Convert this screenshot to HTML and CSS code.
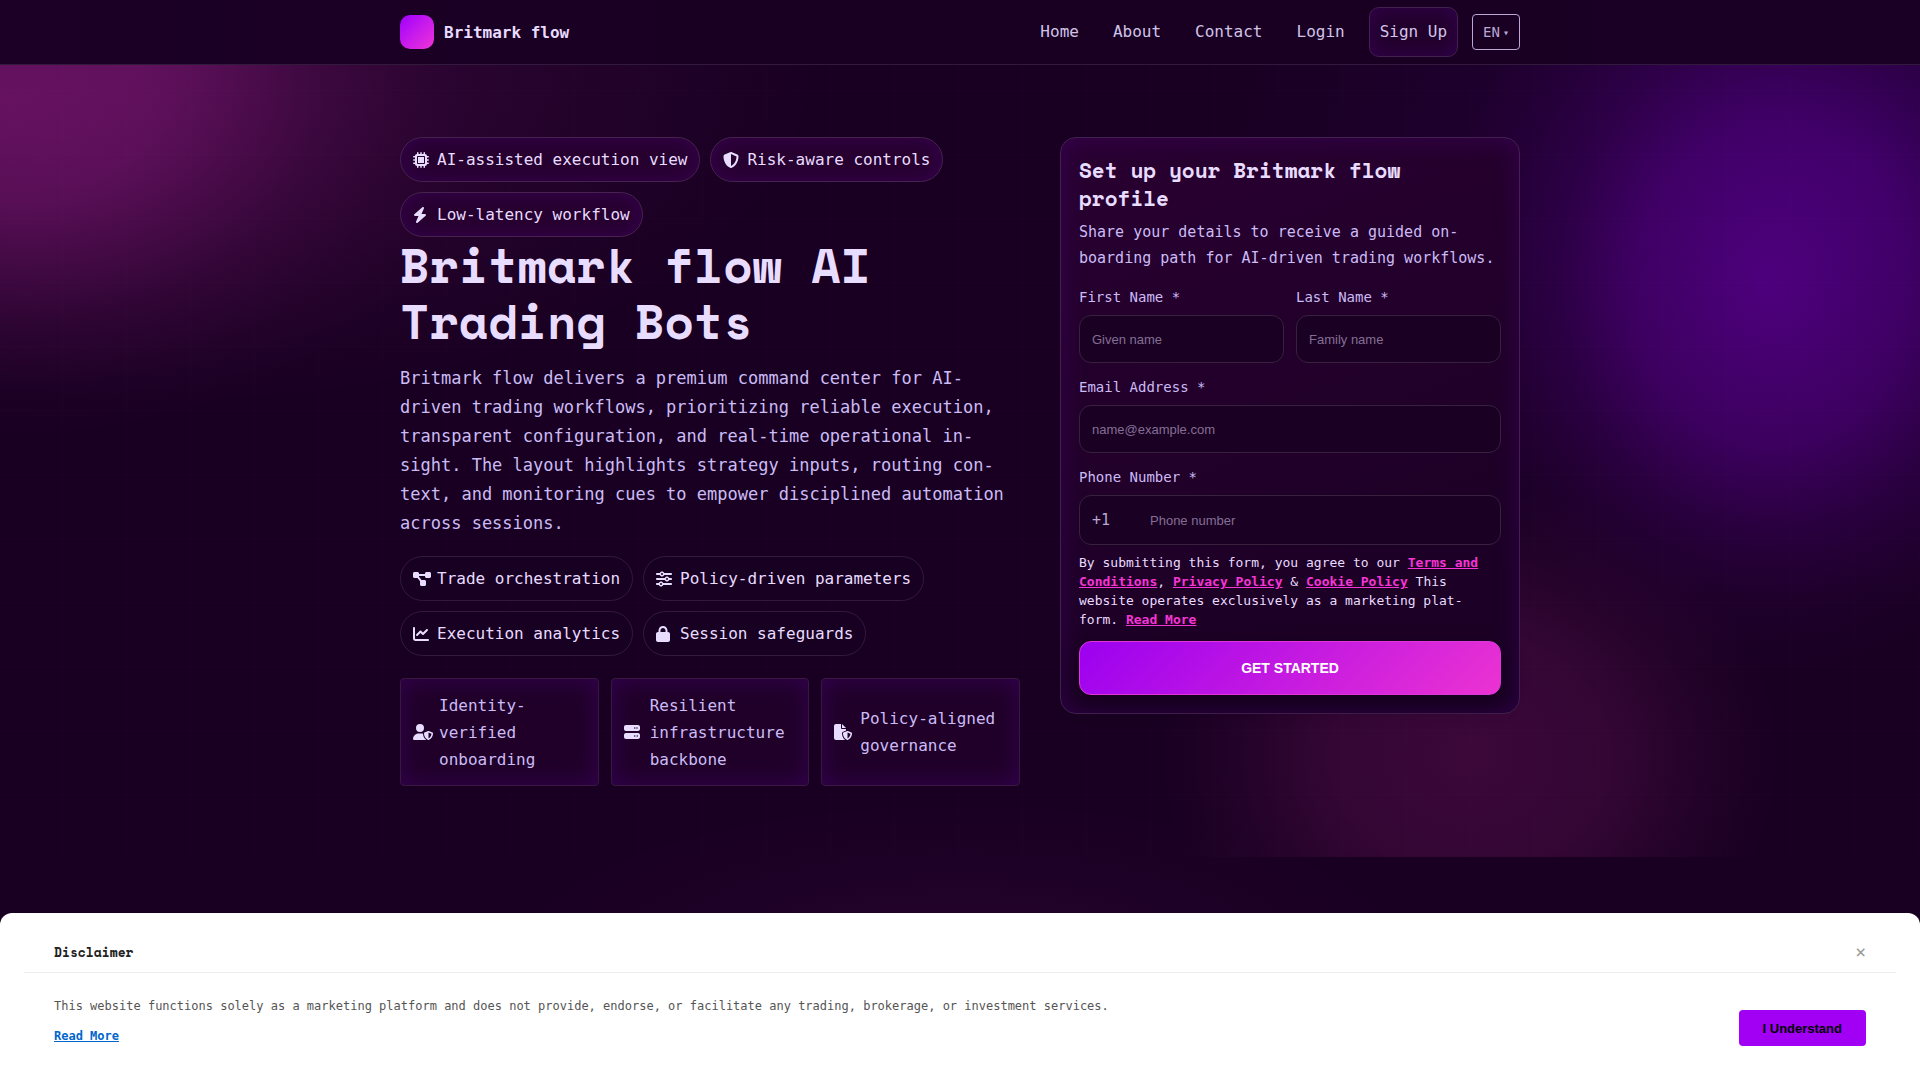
FILE: index.html
```html
<!DOCTYPE html>
<html lang="en">
<head>
    <meta charset="UTF-8">
    <meta name="viewport" content="width=device-width, initial-scale=1.0">
    <title>Britmark flow</title>
    <link rel="stylesheet" href="styles.css">
</head>
<body>

    <header class="site-header">
        <div class="container header-inner">
            <a href="#" class="brand">
                <span class="brand-mark"></span>
                <span>Britmark flow</span>
            </a>
            <nav class="nav">
                <a href="#" class="nav-link">Home</a>
                <a href="#" class="nav-link">About</a>
                <a href="#" class="nav-link">Contact</a>
                <a href="#" class="nav-link">Login</a>
                <a href="#" class="nav-link nav-signup">Sign Up</a>
                <button type="button" class="lang">EN <span class="caret">▾</span></button>
            </nav>
        </div>
    </header>

    <main class="hero">
        <div class="container hero-grid">

            <section class="hero-copy">
                <div class="chips">
                    <span class="chip chip-glow">
                        <span class="icon"><svg viewBox="0 0 512 512"><path d="M176 24c0-13.300-10.700-24-24-24s-24 10.700-24 24V64c-35.300 0-64 28.700-64 64H24c-13.300 0-24 10.700-24 24s10.700 24 24 24H64v56H24c-13.300 0-24 10.700-24 24s10.700 24 24 24H64v56H24c-13.300 0-24 10.700-24 24s10.700 24 24 24H64c0 35.300 28.700 64 64 64v40c0 13.300 10.700 24 24 24s24-10.700 24-24V448h56v40c0 13.300 10.700 24 24 24s24-10.700 24-24V448h56v40c0 13.300 10.700 24 24 24s24-10.700 24-24V448c35.300 0 64-28.700 64-64h40c13.300 0 24-10.700 24-24s-10.700-24-24-24H448V280h40c13.300 0 24-10.700 24-24s-10.700-24-24-24H448V176h40c13.300 0 24-10.700 24-24s-10.700-24-24-24H448c0-35.300-28.700-64-64-64V24c0-13.300-10.700-24-24-24s-24 10.700-24 24V64H280V24c0-13.300-10.700-24-24-24s-24 10.700-24 24V64H176V24zM160 128H352c17.700 0 32 14.300 32 32V352c0 17.700-14.300 32-32 32H160c-17.700 0-32-14.300-32-32V160c0-17.700 14.300-32 32-32zm192 32H160V352H352V160z"/></svg></span>
                        AI-assisted execution view
                    </span>
                    <span class="chip chip-glow">
                        <span class="icon"><svg viewBox="0 0 512 512"><path d="M256 0c4.600 0 9.200 1 13.400 2.900L457.700 82.800c22 9.300 38.400 31 38.300 57.200c-.5 99.200-41.300 280.700-213.600 363.200c-16.700 8-36.100 8-52.800 0C57.300 420.700 16.500 239.200 16 140c-.1-26.200 16.300-47.900 38.300-57.200L242.700 2.900C246.800 1 251.400 0 256 0zm0 66.800V444.800C394 378 431.100 230.100 432 141.400L256 66.800z"/></svg></span>
                        Risk-aware controls
                    </span>
                    <span class="chip chip-glow">
                        <span class="icon"><svg viewBox="0 0 448 512"><path d="M349.400 44.600c5.900-13.700 1.500-29.700-10.600-38.500s-28.600-8-39.900 1.800l-256 224c-10 8.800-13.600 22.900-8.900 35.300S50.700 288 64 288H175.500L98.600 467.400c-5.900 13.700-1.500 29.700 10.600 38.500s28.600 8 39.900-1.800l256-224c10-8.800 13.600-22.900 8.900-35.300s-16.600-20.700-30-20.700H272.500L349.400 44.600z"/></svg></span>
                        Low-latency workflow
                    </span>
                </div>

                <h1>Britmark flow AI Trading Bots</h1>
                <p class="lead">Britmark flow delivers a premium command center for AI-driven trading workflows, prioritizing reliable execution, transparent configuration, and real-time operational in&shy;sight. The layout highlights strategy inputs, routing con&shy;text, and monitoring cues to empower disciplined automation across sessions.</p>

                <div class="chips">
                    <span class="chip">
                        <span class="icon"><svg viewBox="0 0 576 512"><path d="M0 80C0 53.500 21.500 32 48 32h96c26.500 0 48 21.500 48 48V96H384V80c0-26.500 21.500-48 48-48h96c26.500 0 48 21.500 48 48v96c0 26.500-21.500 48-48 48H432c-26.500 0-48-21.500-48-48V160H192v16c0 1.700-.1 3.400-.3 5L272 288h96c26.500 0 48 21.500 48 48v96c0 26.500-21.500 48-48 48H272c-26.500 0-48-21.500-48-48V336c0-1.700 .1-3.400 .3-5L144 224H48c-26.500 0-48-21.500-48-48V80z"/></svg></span>
                        Trade orchestration
                    </span>
                    <span class="chip">
                        <span class="icon"><svg viewBox="0 0 512 512"><path d="M0 416c0 17.700 14.300 32 32 32l54.700 0c12.300 28.300 40.500 48 73.300 48s61-19.700 73.300-48L480 448c17.700 0 32-14.300 32-32s-14.300-32-32-32l-246.700 0c-12.300-28.300-40.500-48-73.300-48s-61 19.700-73.300 48L32 384c-17.700 0-32 14.300-32 32zm128 0a32 32 0 1 1 64 0 32 32 0 1 1 -64 0zM320 256a32 32 0 1 1 64 0 32 32 0 1 1 -64 0zm32-80c-32.800 0-61 19.700-73.300 48L32 224c-17.700 0-32 14.300-32 32s14.300 32 32 32l246.700 0c12.300 28.300 40.500 48 73.300 48s61-19.700 73.300-48l54.700 0c17.700 0 32-14.300 32-32s-14.300-32-32-32l-54.700 0c-12.300-28.300-40.500-48-73.300-48zM192 128a32 32 0 1 1 0-64 32 32 0 1 1 0 64zm73.300-64C253 35.700 224.800 16 192 16s-61 19.700-73.300 48L32 64C14.300 64 0 78.300 0 96s14.300 32 32 32l86.700 0c12.300 28.300 40.500 48 73.300 48s61-19.700 73.300-48L480 128c17.700 0 32-14.300 32-32s-14.300-32-32-32L265.300 64z"/></svg></span>
                        Policy-driven parameters
                    </span>
                    <span class="chip">
                        <span class="icon"><svg viewBox="0 0 512 512"><path d="M64 64c0-17.700-14.300-32-32-32S0 46.300 0 64V400c0 44.200 35.800 80 80 80H480c17.700 0 32-14.300 32-32s-14.300-32-32-32H80c-8.800 0-16-7.200-16-16V64zm406.600 86.600c12.500-12.500 12.500-32.800 0-45.300s-32.800-12.500-45.300 0L320 210.700l-57.400-57.400c-12.500-12.500-32.800-12.500-45.300 0l-112 112c-12.500 12.500-12.500 32.800 0 45.300s32.800 12.500 45.300 0L240 221.300l57.400 57.400c12.500 12.500 32.800 12.500 45.300 0l128-128z"/></svg></span>
                        Execution analytics
                    </span>
                    <span class="chip">
                        <span class="icon"><svg viewBox="0 0 448 512"><path d="M144 144v48H304V144c0-44.200-35.800-80-80-80s-80 35.800-80 80zM80 192V144C80 64.500 144.500 0 224 0s144 64.500 144 144v48h16c35.300 0 64 28.700 64 64V448c0 35.300-28.700 64-64 64H64c-35.300 0-64-28.700-64-64V256c0-35.300 28.700-64 64-64H80z"/></svg></span>
                        Session safeguards
                    </span>
                </div>

                <div class="trust">
                    <div class="trust-card">
                        <span class="icon"><svg viewBox="0 0 640 512"><path d="M224 256A128 128 0 1 0 224 0a128 128 0 1 0 0 256zm-45.700 48C79.800 304 0 383.800 0 482.300C0 498.700 13.300 512 29.700 512H418.300c1.800 0 3.500-.2 5.300-.5c-76.300-55.100-99.800-141-103.100-200.200c-16.100-4.800-33.100-7.300-50.700-7.300H178.300zm308.800-78.300l-120 48C358 277.400 352 286.200 352 296c0 63.300 25.900 168.800 134.800 214.200c5.900 2.500 12.600 2.500 18.500 0C614.100 464.800 640 359.300 640 296c0-9.800-6-18.600-15.100-22.300l-120-48c-5.700-2.300-12.100-2.300-17.800 0zM591.400 312c-3.900 50.700-27.200 116.700-95.400 149.700V273.800L591.400 312z"/></svg></span>
                        <span>Identity-verified onboarding</span>
                    </div>
                    <div class="trust-card">
                        <span class="icon"><svg viewBox="0 0 512 512"><path d="M64 32C28.700 32 0 60.700 0 96v64c0 35.300 28.700 64 64 64H448c35.300 0 64-28.700 64-64V96c0-35.300-28.700-64-64-64H64zm280 72a24 24 0 1 1 0 48 24 24 0 1 1 0-48zm48 24a24 24 0 1 1 48 0 24 24 0 1 1 -48 0zM64 288c-35.300 0-64 28.700-64 64v64c0 35.300 28.700 64 64 64H448c35.300 0 64-28.700 64-64V352c0-35.300-28.700-64-64-64H64zm280 72a24 24 0 1 1 0 48 24 24 0 1 1 0-48zm56 24a24 24 0 1 1 48 0 24 24 0 1 1 -48 0z"/></svg></span>
                        <span>Resilient infrastructure backbone</span>
                    </div>
                    <div class="trust-card">
                        <span class="icon"><svg viewBox="0 0 576 512"><path d="M0 64C0 28.700 28.700 0 64 0H224V128c0 17.700 14.300 32 32 32H384v47l-92.800 37.100c-21.300 8.500-35.200 29.100-35.200 52c0 56.600 18.900 148 94.200 208.300c-9 4.800-19.300 7.600-30.200 7.600H64c-35.300 0-64-28.700-64-64V64zm384 64H256V0L384 128zm39.100 97.700c5.700-2.300 12.100-2.300 17.800 0l120 48C570 277.400 576 286.200 576 296c0 63.300-25.900 168.800-134.800 214.200c-5.900 2.500-12.600 2.500-18.500 0C313.900 464.800 288 359.300 288 296c0-9.800 6-18.600 15.100-22.300l120-48zM527.400 312L432 273.800V461.700c68.200-33 91.500-99 95.400-149.700z"/></svg></span>
                        <span>Policy-aligned governance</span>
                    </div>
                </div>
            </section>

            <form class="signup" action="#" method="post">
                <h2>Set up your Britmark flow profile</h2>
                <p class="signup-text">Share your details to receive a guided on&shy;boarding path for AI-driven trading workflows.</p>

                <div class="row">
                    <div class="field">
                        <label for="first-name">First Name *</label>
                        <input type="text" id="first-name" placeholder="Given name">
                    </div>
                    <div class="field">
                        <label for="last-name">Last Name *</label>
                        <input type="text" id="last-name" placeholder="Family name">
                    </div>
                </div>
                <div class="field">
                    <label for="email">Email Address *</label>
                    <input type="email" id="email" placeholder="name@example.com">
                </div>
                <div class="field field-last">
                    <label for="phone">Phone Number *</label>
                    <div class="phone">
                        <span class="phone-code">+1</span>
                        <input type="tel" id="phone" placeholder="Phone number">
                    </div>
                </div>

                <p class="consent">By submitting this form, you agree to our <a href="#">Terms and Conditions</a>, <a href="#">Privacy Policy</a> &amp; <a href="#">Cookie Policy</a> This website operates exclusively as a marketing plat&shy;form. <a href="#">Read More</a></p>
                <button type="submit" class="submit">GET STARTED</button>
            </form>

        </div>
    </main>

    <!-- Disclaimer bar -->
    <aside class="disclaimer" id="disclaimer">
        <div class="disclaimer-head">
            <h3>Disclaimer</h3>
            <button type="button" class="close" aria-label="Close" onclick="hideDisclaimer()">×</button>
        </div>
        <div class="disclaimer-body">
            <div class="disclaimer-text">
                <p>This website functions solely as a marketing platform and does not provide, endorse, or facilitate any trading, brokerage, or investment services.</p>
                <a href="#">Read More</a>
            </div>
            <button type="button" class="accept" onclick="hideDisclaimer()">I Understand</button>
        </div>
    </aside>

    <script>
        function hideDisclaimer() {
            document.getElementById("disclaimer").hidden = true;
        }
    </script>

</body>
</html>
```

FILE: styles.css
```css
* {
    box-sizing: border-box;
}

body {
    margin: 0;
    min-height: 100vh;
    font-family: "DejaVu Sans Mono", monospace;
    font-size: 16px;
    line-height: 27px;
    color: #e8dcff;
    background: radial-gradient(ellipse 460px 160px at 50% 960px, rgba(240, 48, 208, 0.06), transparent), #190022;
}

h1, h2, h3, p {
    margin: 0;
}

h1, h2, h3 {
    font-family: "Space Mono", "DejaVu Sans Mono", monospace;
}

button, input {
    font-family: "Liberation Sans", Arial, sans-serif;
    font-size: 13px;
}

button {
    cursor: pointer;
}

.container {
    max-width: 1160px;
    margin: 0 auto;
    padding: 0 20px;
}

/* Header */
.site-header {
    padding: 7px 0;
    background: linear-gradient(90deg, #1c0026, #190022 40%, #190024);
    border-bottom: 1px solid #321a3c;
}

.header-inner {
    display: flex;
    align-items: center;
    justify-content: space-between;
}

.brand {
    display: flex;
    align-items: center;
    gap: 10px;
    font-weight: bold;
    color: #e8dcff;
    text-decoration: none;
}

.brand-mark {
    width: 34px;
    height: 34px;
    border-radius: 10px;
    background: linear-gradient(135deg, #a000ff, #f035d8);
}

.nav {
    display: flex;
    align-items: center;
    gap: 14px;
}

.nav-link {
    padding: 10px;
    line-height: 28px;
    color: #d0c4e8;
    text-decoration: none;
}

.nav-signup {
    border: 1px solid #42204f;
    border-radius: 10px;
    background: #22002c;
    box-shadow: inset 0 0 20px rgba(90, 0, 160, 0.3);
}

.lang {
    display: flex;
    align-items: center;
    gap: 3px;
    height: 36px;
    padding: 0 10px;
    border: 1px solid #b9a8d4;
    border-radius: 4px;
    background: none;
    color: #b9a8d4;
    font-family: "DejaVu Sans Mono", monospace;
    font-size: 14px;
}

.caret {
    font-size: 10px;
}

/* Hero */
.hero {
    padding: 72px 0 71px;
    background:
        repeating-linear-gradient(90deg, transparent 0 62px, rgba(255, 255, 255, 0.006) 62px 63px, transparent 63px 64px),
        repeating-linear-gradient(180deg, transparent 0 25px, rgba(255, 255, 255, 0.006) 25px 26px, transparent 26px 64px),
        radial-gradient(ellipse 470px 340px at 10px 35px, rgba(240, 50, 210, 0.29), rgba(240, 50, 210, 0.24) 30%, rgba(240, 50, 210, 0.16) 47%, rgba(240, 50, 210, 0.07) 66%, rgba(240, 50, 210, 0.02) 85%, transparent),
        radial-gradient(ellipse 640px 340px at 180px 0, rgba(240, 50, 210, 0.13), transparent),
        radial-gradient(ellipse 330px 390px at 1770px 220px, rgba(130, 0, 210, 0.45), rgba(130, 0, 210, 0.3) 41%, rgba(130, 0, 210, 0.13) 64%, rgba(130, 0, 210, 0.05) 81%, transparent),
        radial-gradient(ellipse 660px 440px at 1880px 100px, rgba(110, 0, 220, 0.16), transparent),
        radial-gradient(ellipse 310px 270px at 1470px 690px, rgba(240, 50, 180, 0.16), rgba(240, 50, 180, 0.12) 45%, rgba(240, 50, 180, 0.04) 78%, transparent);
}

.hero-grid {
    display: grid;
    grid-template-columns: 620fr 460fr;
    gap: 40px;
    align-items: start;
}

.chips {
    display: flex;
    flex-wrap: wrap;
    gap: 10px;
}

.chip {
    display: flex;
    align-items: center;
    gap: 6px;
    padding: 8px 12px;
    border: 1px solid #321a3e;
    border-radius: 999px;
    background: #180022;
}

.chip-glow {
    border-color: #46234f;
    background: #27002f;
    box-shadow: inset 0 0 20px rgba(80, 0, 140, 0.35);
}

.icon {
    display: flex;
    flex: none;
    width: 18px;
}

.icon svg {
    flex: none;
    height: 16px;
    fill: #e8dcff;
    fill-rule: evenodd;
}

h1 {
    font-size: 48px;
    line-height: 56px;
}

.lead {
    margin: 15px 0 18px;
    font-size: 17px;
    line-height: 29px;
    color: #cbbcf5;
}

.trust {
    display: grid;
    grid-template-columns: repeat(3, 1fr);
    gap: 12px;
    margin-top: 22px;
}

.trust-card {
    display: flex;
    align-items: center;
    gap: 8px;
    min-height: 108px;
    padding: 12px;
    border: 1px solid #37193f;
    border-radius: 4px;
    background: #200029;
    box-shadow: inset 0 0 24px rgba(80, 0, 140, 0.4);
    color: #cbbcf5;
}

/* Form */
.signup {
    padding: 18px;
    border: 1px solid #432050;
    border-radius: 16px;
    background: linear-gradient(160deg, #290031, #1c0025 80%);
    box-shadow: inset 0 0 24px rgba(80, 0, 140, 0.35);
}

h2 {
    font-size: 21px;
    line-height: 28px;
}

.signup-text {
    margin: 7px 0 14px;
    font-size: 15px;
    line-height: 26px;
    color: #cbbcf5;
}

.row {
    display: grid;
    grid-template-columns: 1fr 1fr;
    gap: 12px;
}

.field {
    display: flex;
    flex-direction: column;
    gap: 6px;
    margin-bottom: 12px;
}

.field-last {
    margin-bottom: 8px;
}

.field label {
    font-size: 14px;
    line-height: 24px;
    color: #cbbcf5;
}

.field input {
    width: 100%;
    height: 48px;
    padding: 0 12px;
    border: 1px solid #38203f;
    border-radius: 12px;
    background: #1a0023;
    color: #e8dcff;
}

.field input::placeholder {
    color: #846f94;
}

.phone {
    display: flex;
    align-items: center;
    padding-left: 12px;
    border: 1px solid #38203f;
    border-radius: 12px;
    background: #1a0023;
}

.phone-code {
    width: 46px;
    font-size: 15px;
    color: #b9a8d4;
}

.phone input {
    flex: 1;
    border: 0;
    background: none;
}

.consent {
    padding-right: 10px;
    margin-bottom: 12px;
    font-size: 13px;
    line-height: 19px;
}

.consent a {
    font-weight: bold;
    color: #f535d5;
}

.submit {
    width: 100%;
    height: 54px;
    border: 1px solid #e035dc;
    border-radius: 12px;
    background: linear-gradient(135deg, #9b00f0, #ec33d2);
    box-shadow: 0 8px 20px rgba(10, 0, 16, 0.5);
    color: #fff;
    font-size: 14px;
    font-weight: bold;
}

/* Disclaimer */
.disclaimer {
    position: fixed;
    left: 0;
    right: 0;
    bottom: 0;
    padding: 20px 24px;
    border-radius: 12px 12px 0 0;
    background: #fff;
    color: #555;
}

.disclaimer-head {
    display: flex;
    align-items: center;
    justify-content: space-between;
    padding: 9px 30px 10px;
    border-bottom: 1px solid #eee;
}

h3 {
    font-size: 13px;
    line-height: 20px;
    color: #222;
}

.close {
    padding: 0;
    border: 0;
    background: none;
    color: #999;
    font-family: "DejaVu Sans Mono", monospace;
    font-size: 18px;
    line-height: 20px;
}

.disclaimer-body {
    display: flex;
    align-items: flex-end;
    justify-content: space-between;
    padding: 23px 30px 14px;
}

.disclaimer-text {
    display: flex;
    flex-direction: column;
    align-items: flex-start;
    gap: 10px;
    font-size: 12px;
    line-height: 20px;
}

.disclaimer-text a {
    font-weight: bold;
    color: #0066cc;
}

.accept {
    height: 36px;
    padding: 0 24px;
    border: 0;
    border-radius: 4px;
    background: #a100f5;
    color: #000;
    font-weight: bold;
}

@media (max-width: 900px) {
    .hero-grid {
        grid-template-columns: 1fr;
    }

    .site-header .nav {
        flex-wrap: wrap;
    }
}
```
